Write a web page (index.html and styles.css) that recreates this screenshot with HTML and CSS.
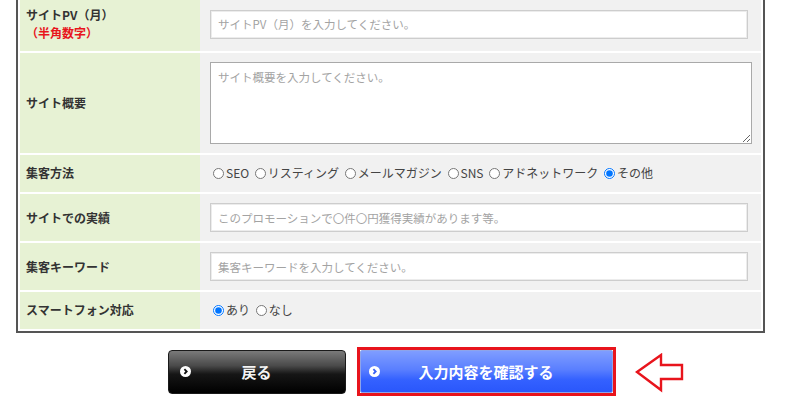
FILE: index.html
```html
<!DOCTYPE html>
<html lang="ja">
<head>
<meta charset="utf-8">
<title>フォーム</title>
<link rel="stylesheet" href="styles.css">
</head>
<body>
<div class="page">
  <table class="form-table">
    <colgroup><col class="col-label"><col class="col-field"></colgroup>
    <tr>
      <th>サイトPV（月）<br><span class="note">（半角数字）</span></th>
      <td><input class="text" type="text" placeholder="サイトPV（月）を入力してください。"></td>
    </tr>
    <tr>
      <th>サイト概要</th>
      <td><textarea class="area" placeholder="サイト概要を入力してください。"></textarea></td>
    </tr>
    <tr class="short">
      <th>集客方法</th>
      <td class="radios">
        <label><input type="radio" name="m">SEO</label>
        <label><input type="radio" name="m">リスティング</label>
        <label><input type="radio" name="m">メールマガジン</label>
        <label><input type="radio" name="m">SNS</label>
        <label><input type="radio" name="m">アドネットワーク</label>
        <label><input type="radio" name="m" checked>その他</label>
      </td>
    </tr>
    <tr>
      <th>サイトでの実績</th>
      <td><input class="text" type="text" placeholder="このプロモーションで〇件〇円獲得実績があります等。"></td>
    </tr>
    <tr>
      <th>集客キーワード</th>
      <td><input class="text" type="text" placeholder="集客キーワードを入力してください。"></td>
    </tr>
    <tr class="short">
      <th>スマートフォン対応</th>
      <td class="radios">
        <label><input type="radio" name="s" checked>あり</label>
        <label><input type="radio" name="s">なし</label>
      </td>
    </tr>
  </table>

  <div class="actions">
    <button class="btn btn-back" type="button">
      <svg class="btn-icon" width="11" height="11" viewBox="0 0 11 11"><circle cx="5.5" cy="5.5" r="5.5" fill="#fff"/><path d="M4.4 3.2 L6.7 5.5 L4.4 7.8" fill="none" stroke="#111" stroke-width="1.8"/></svg>
      <span class="btn-text">戻る</span>
    </button>
    <div class="confirm-frame">
      <button class="btn btn-confirm" type="button">
        <svg class="btn-icon" width="11" height="11" viewBox="0 0 11 11"><circle cx="5.5" cy="5.5" r="5.5" fill="#fff"/><path d="M4.4 3.2 L6.7 5.5 L4.4 7.8" fill="none" stroke="#3a62f5" stroke-width="1.8"/></svg>
        <span class="btn-text">入力内容を確認する</span>
      </button>
    </div>
    <svg class="pointer" width="50" height="40" viewBox="0 0 50 40"><polygon points="2,19 26,2 26,12 47,12 47,26 26,26 26,37" fill="#fff" stroke="#e8141c" stroke-width="2.4" stroke-linejoin="miter"/></svg>
  </div>
</div>
</body>
</html>
```

FILE: styles.css
```css
html, body {
  margin: 0;
  padding: 0;
  background: #fff;
}

body {
  font-family: "Noto Sans CJK JP", "Noto Sans", sans-serif;
  font-size: 12px;
  color: #333;
}

.page {
  width: 800px;
}

.form-table {
  width: 749px;
  margin: -7px 0 0 16px;
  border: 2px solid #555;
  border-collapse: separate;
  border-spacing: 0 2px;
  padding: 0 2px;
  table-layout: fixed;
  background: #fff;
}

.col-label { width: 180px; }
.col-field { width: 561px; }

.form-table th {
  background: #e7f2d4;
  text-align: left;
  font-weight: bold;
  font-size: 12px;
  line-height: 18px;
  color: #333;
  padding: 9px 6px;
  vertical-align: middle;
}

.form-table td {
  background: #f1f1f1;
  padding: 9px 10px;
  line-height: 18px;
  vertical-align: middle;
}

.form-table tr.short th,
.form-table tr.short td {
  padding-top: 9px;
  padding-bottom: 10px;
}

.note {
  color: #e8141c;
}

.text {
  display: block;
  box-sizing: border-box;
  width: 538px;
  height: 29px;
  margin: 0;
  padding: 0 7px;
  border: 1px solid #cdcdcd;
  box-shadow: inset 0 0 0 1px #ececec;
  background: #fff;
  font-family: inherit;
  font-size: 11.5px;
  color: #333;
  outline: none;
}

.area {
  display: block;
  box-sizing: border-box;
  width: 542px;
  height: 82px;
  margin: 0;
  padding: 5px 7px;
  border: 1px solid #a9a9a9;
  background: #fff;
  font-family: inherit;
  font-size: 11.5px;
  line-height: 18px;
  color: #333;
  outline: none;
}

.text::placeholder,
.area::placeholder {
  color: #a3a3a3;
}

.radios {
  font-size: 12px;
  color: #444;
  white-space: nowrap;
}

.radios label {
  display: inline;
}

.radios input {
  width: 11px;
  height: 11px;
  margin: 0 2px 0 3px;
  vertical-align: -1px;
}

.actions {
  position: relative;
  width: 749px;
  margin: 14px 0 0 17px;
  display: flex;
  justify-content: center;
  align-items: center;
  gap: 11px;
}

.btn {
  display: grid;
  grid-template-columns: 1fr auto 1fr;
  align-items: center;
  box-sizing: border-box;
  margin: 0;
  font-family: inherit;
  font-size: 15px;
  font-weight: bold;
  color: #fff;
  cursor: pointer;
}

.btn-icon {
  grid-column: 1;
  justify-self: start;
}

.btn-text {
  grid-column: 2;
  line-height: 20px;
}

.btn-back {
  width: 178px;
  height: 44px;
  padding: 0 11px;
  border: 1px solid #1a1a1a;
  border-radius: 4px;
  background: linear-gradient(to bottom, #7a7a7a 0%, #4a4a4a 35%, #161616 55%, #000 100%);
  color: #f4f4f4;
}

.confirm-frame {
  border: 3px solid #e8141c;
  display: flex;
}

.btn-confirm {
  width: 253px;
  height: 43px;
  padding: 0 8px;
  border: 1px solid #8ea4ea;
  border-radius: 2px;
  background: linear-gradient(to bottom, #7f9dff 0%, #5a7fff 45%, #3461ff 70%, #2a57fb 100%);
}

.pointer {
  position: absolute;
  left: 618px;
  top: 6px;
}
```
